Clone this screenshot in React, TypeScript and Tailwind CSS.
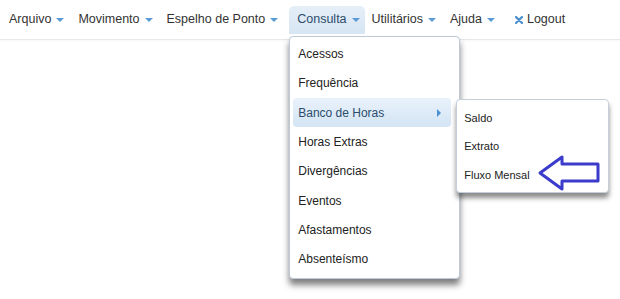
const NAV = ["Arquivo", "Movimento", "Espelho de Ponto", "Consulta", "Utilitários", "Ajuda"];

const CONSULTA = [
  "Acessos",
  "Frequência",
  "Banco de Horas",
  "Horas Extras",
  "Divergências",
  "Eventos",
  "Afastamentos",
  "Absenteísmo",
];

const BANCO = ["Saldo", "Extrato", "Fluxo Mensal"];

function Caret() {
  return (
    <span className="ml-[5px] mt-[1px] h-0 w-0 border-l-[4px] border-r-[4px] border-t-[4px] border-l-transparent border-r-transparent border-t-[#5b9bd5]" />
  );
}

function SubMenu() {
  return (
    <div className="absolute left-[166px] top-[62px] w-[153px] rounded-[4px] border border-[#c3d0dc] bg-white pb-[3px] pt-[4px] shadow-[0_5px_5px_rgba(0,0,0,0.45)]">
      {BANCO.map((item) => (
        <div key={item} className="flex h-[28.5px] items-center pl-[7px] text-[11px] text-[#222]">
          {item}
        </div>
      ))}
    </div>
  );
}

function ConsultaMenu() {
  return (
    <div className="absolute left-0 top-[30px] w-[171px] rounded-[4px] border border-[#bccad8] bg-white pb-[4px] pt-[3px] shadow-[0_6px_6px_rgba(0,0,0,0.5)]">
      {CONSULTA.map((item) => {
        const active = item === "Banco de Horas";
        return (
          <div
            key={item}
            className={[
              "flex h-[29.3px] items-center text-[12px]",
              active
                ? "ml-[3px] mr-[8px] rounded-[4px] bg-gradient-to-b from-[#e9f2fb] to-[#d3e4f4] pl-[5px] pr-[10px] text-[#2b4c6c]"
                : "pl-[8px] text-[#222]",
            ].join(" ")}
          >
            <span className="flex-1">{item}</span>
            {active && (
              <span className="h-0 w-0 border-b-[4px] border-l-[4px] border-t-[4px] border-b-transparent border-l-[#4a90d0] border-t-transparent" />
            )}
          </div>
        );
      })}
      <SubMenu />
    </div>
  );
}

export default function App() {
  return (
    <div className="relative h-[299px] w-[620px] overflow-hidden bg-white font-['Liberation_Sans',Arial,sans-serif]">
      {/* Navbar */}
      <div className="flex h-[40px] items-center border-b border-[#e8e8e8] pl-[2px] shadow-[0_1px_2px_rgba(0,0,0,0.04)]">
        {NAV.map((label) => {
          const open = label === "Consulta";
          return (
            <div
              key={label}
              className={[
                "relative flex h-[28px] items-center text-[12.5px]",
                open
                  ? "ml-[4px] rounded-t-[5px] bg-gradient-to-b from-[#e6eff8] to-[#d6e5f3] pl-[8px] pr-[5px] text-[#2b4c6c]"
                  : "px-[7px] text-[#333]",
              ].join(" ")}
            >
              {label}
              <Caret />
              {open && <ConsultaMenu />}
            </div>
          );
        })}
        <div className="flex h-[28px] items-center pl-[13px] text-[12.5px] text-[#333]">
          <svg width="8" height="8" viewBox="0 0 8 8" className="mr-[4px] mt-[1px]">
            <path d="M1 1 L7 7 M7 1 L1 7" stroke="#4a8fd0" strokeWidth="2.2" strokeLinecap="round" />
          </svg>
          Logout
        </div>
      </div>

      {/* Annotation arrow */}
      <svg className="absolute left-[536px] top-[153px]" width="66" height="40" viewBox="0 0 66 40">
        <path
          d="M4 20 L26 4 L26 11 L62 11 L62 28 L26 28 L26 36 Z"
          fill="none"
          stroke="#3b3bcc"
          strokeWidth="3"
          strokeLinejoin="round"
        />
      </svg>
    </div>
  );
}
